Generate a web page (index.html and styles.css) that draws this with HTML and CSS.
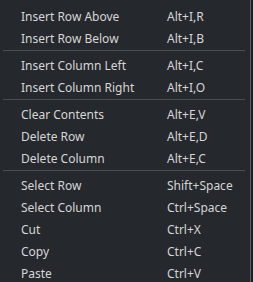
FILE: index.html
```html
<!DOCTYPE html>
<html lang="en">
<head>
    <meta charset="UTF-8">
    <title>Table Context Menu</title>
    <link rel="stylesheet" href="styles.css">
</head>
<body>

    <!-- Context menu -->
    <div class="menu">
        <div class="item"><span class="label">Insert Row Above</span><span class="key">Alt+I,R</span></div>
        <div class="item"><span class="label">Insert Row Below</span><span class="key">Alt+I,B</span></div>
        <div class="sep"></div>
        <div class="item"><span class="label">Insert Column Left</span><span class="key">Alt+I,C</span></div>
        <div class="item"><span class="label">Insert Column Right</span><span class="key">Alt+I,O</span></div>
        <div class="sep"></div>
        <div class="item"><span class="label">Clear Contents</span><span class="key">Alt+E,V</span></div>
        <div class="item"><span class="label">Delete Row</span><span class="key">Alt+E,D</span></div>
        <div class="item"><span class="label">Delete Column</span><span class="key">Alt+E,C</span></div>
        <div class="sep"></div>
        <div class="item"><span class="label">Select Row</span><span class="key">Shift+Space</span></div>
        <div class="item"><span class="label">Select Column</span><span class="key">Ctrl+Space</span></div>
        <div class="item"><span class="label">Cut</span><span class="key">Ctrl+X</span></div>
        <div class="item"><span class="label">Copy</span><span class="key">Ctrl+C</span></div>
        <div class="item"><span class="label">Paste</span><span class="key">Ctrl+V</span></div>
    </div>

</body>
</html>
```

FILE: styles.css
```css
body {
    margin: 0;
    background: #1e1f22;
    font-family: "Noto Sans", "Open Sans", sans-serif;
    font-size: 12px;
    color: #d6d6d6;
    overflow: hidden;
}
.menu {
    width: 250px;
    background: #25282c;
    border-right: 1px solid #5b5f63;
    padding-top: 5px;
}
.item {
    display: flex;
    height: 22px;
    align-items: center;
    padding-left: 21px;
}
.label {
    width: 146px;
    white-space: nowrap;
}
.key {
    white-space: nowrap;
}
.sep {
    height: 1px;
    margin: 1px 5px 3px 3px;
    background: #4a4d51;
}
```
